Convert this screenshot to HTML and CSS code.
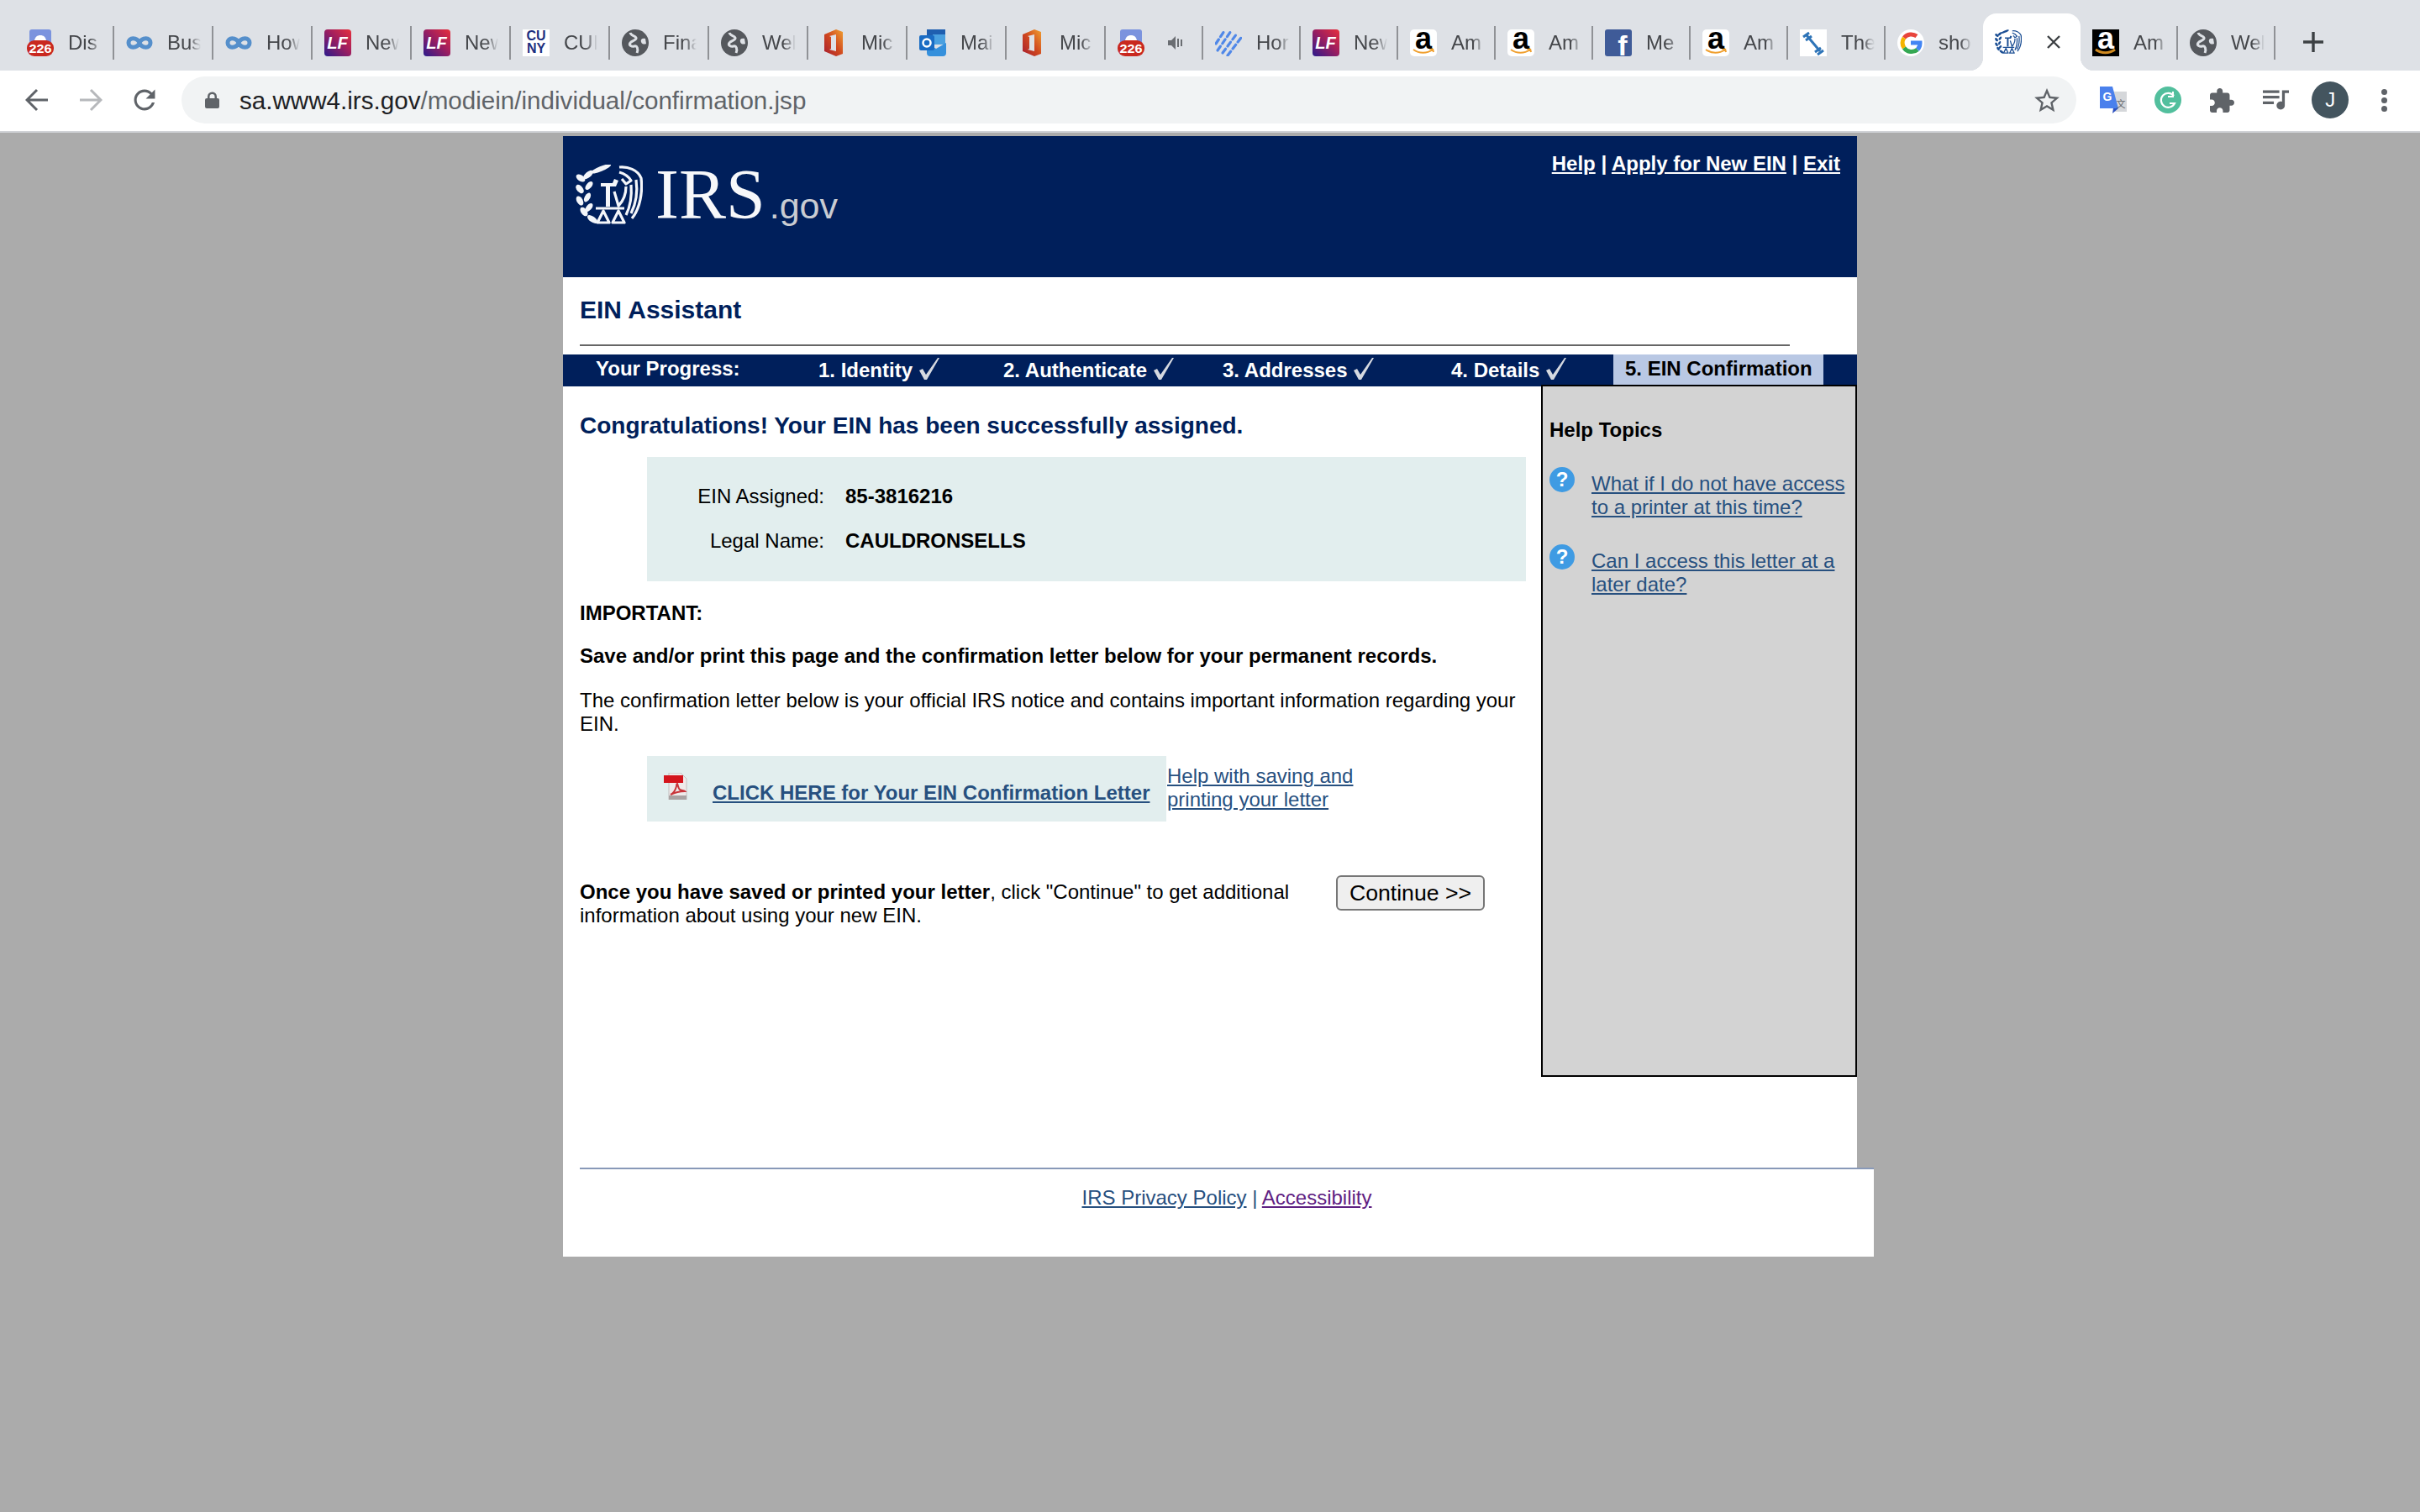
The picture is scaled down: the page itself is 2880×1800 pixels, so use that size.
FILE: index.html
```html
<!DOCTYPE html>
<html>
<head>
    <meta charset="UTF-8">
    <title>EIN Assistant</title>
    <link rel="stylesheet" href="styles.css">
</head>
<body>
    <!-- icon sheet, everything below pulls from here with <use> -->
    <svg class="icon-sheet" xmlns="http://www.w3.org/2000/svg">
        <defs>
            <linearGradient id="lf-fill" x1="0" y1="1" x2="1" y2="0">
                <stop offset="0" stop-color="#2b1a8c"/>
                <stop offset="0.55" stop-color="#a01e5e"/>
                <stop offset="1" stop-color="#e8303c"/>
            </linearGradient>
            <linearGradient id="office-fill" x1="1" y1="0" x2="0" y2="1">
                <stop offset="0" stop-color="#f0a030"/>
                <stop offset="0.5" stop-color="#d0481f"/>
                <stop offset="1" stop-color="#a51c30"/>
            </linearGradient>
        </defs>
        <symbol id="fav-discord" viewBox="0 0 32 32">
            <rect x="3" y="0" width="26" height="24" rx="3" fill="#7b93de"/>
            <path d="M9 13c1-4 3-6 7-6s6 2 7 6z" fill="#fff"/>
            <rect x="0" y="13" width="32" height="19" rx="9" fill="#c9281f"/>
        </symbol>
        <symbol id="fav-infinity" viewBox="0 0 32 32">
            <path d="M16 16C13 9 3 9 3 16s10 7 13 0 13-7 13 0-10 7-13 0z" fill="none" stroke="#558fcb" stroke-width="5"/>
        </symbol>
        <symbol id="fav-lf" viewBox="0 0 32 32">
            <rect width="32" height="32" rx="4" fill="url(#lf-fill)"/>
        </symbol>
        <symbol id="fav-globe" viewBox="0 0 32 32">
            <circle cx="16" cy="16" r="16" fill="#55585d"/>
            <path d="M10 4c1 4 6 3 7 6s-5 3-7 6 2 5 5 4 5 3 3 8" fill="none" stroke="#dee1e6" stroke-width="3"/>
            <path d="M28 11c-4-1-6 1-5 4s4 3 6 2" fill="#dee1e6"/>
        </symbol>
        <symbol id="fav-office" viewBox="0 0 32 32">
            <path fill-rule="evenodd" d="M19 0L5 6v20l14 6 8-3V3zM19 6v20l-8-2 2-1V9l-2-1z" fill="url(#office-fill)"/>
        </symbol>
        <symbol id="fav-outlook" viewBox="0 0 32 32">
            <rect x="9" y="0" width="22" height="12" fill="#1f5fb0"/>
            <rect x="16" y="6" width="15" height="12" fill="#4aa0e0"/>
            <path d="M9 16l11 7 12-7v12a4 4 0 0 1-4 4H13a4 4 0 0 1-4-4z" fill="#3590dc"/>
            <rect x="0" y="7" width="18" height="18" rx="2" fill="#1a6cc4"/>
            <circle cx="9" cy="16" r="4.5" fill="none" stroke="#fff" stroke-width="2.5"/>
        </symbol>
        <symbol id="fav-stripes" viewBox="0 0 32 32">
            <g fill="none" stroke="#5088e8" stroke-width="3.200" stroke-linecap="round" stroke-dasharray="6 4">
                <path d="M1 17L11 2"/>
                <path d="M3 25L19 2"/>
                <path d="M9 28L26 5"/>
                <path d="M15 31L31 10"/>
            </g>
        </symbol>
        <symbol id="fav-amazon" viewBox="0 0 32 32">
            <rect width="32" height="32" rx="5" fill="#fff"/>
            <path d="M4 24c7 5 16 5 23 0M27 23l1 4M27 23l-4 0" fill="none" stroke="#f0a030" stroke-width="2"/>
        </symbol>
        <symbol id="fav-amazon-dark" viewBox="0 0 32 32">
            <rect width="32" height="32" fill="#000"/>
            <path d="M4 24c7 5 16 5 23 0" fill="none" stroke="#d08a20" stroke-width="3"/>
        </symbol>
        <symbol id="fav-facebook" viewBox="0 0 32 32">
            <rect width="32" height="32" rx="3" fill="#3f5b98"/>
        </symbol>
        <symbol id="fav-strong" viewBox="0 0 32 32">
            <rect width="32" height="32" fill="#fff"/>
            <g fill="none" stroke="#2e74b8" stroke-width="3">
                <path d="M8 7L24 26"/>
                <path d="M4 9l7-5M7 13l7-5M18 27l7-5M21 30l7-5"/>
            </g>
        </symbol>
        <symbol id="fav-google" viewBox="0 0 32 32">
            <circle cx="16" cy="16" r="16" fill="#fff"/>
            <g fill="none" stroke-width="5">
                <path d="M8 10a11 11 0 0 1 15-2" stroke="#e8453c"/>
                <path d="M8 22a11 11 0 0 1 0-12" stroke="#f4b400"/>
                <path d="M24 24a11 11 0 0 1-16-2" stroke="#34a853"/>
                <path d="M16 16h11a11 11 0 0 1-3 8" stroke="#4285f4"/>
            </g>
        </symbol>
        <symbol id="seal" viewBox="0 0 80 72">
            <g fill="currentColor">
                <ellipse cx="30" cy="5" rx="13" ry="3" transform="rotate(-22 30 5)"/>
                <ellipse cx="15" cy="12" rx="7" ry="3.400" transform="rotate(-40 15 12)"/>
                <ellipse cx="6" cy="16" rx="6" ry="3.600" transform="rotate(35 6 16)"/>
                <ellipse cx="16" cy="25" rx="6" ry="3.200" transform="rotate(-50 16 25)"/>
                <ellipse cx="5" cy="29" rx="6" ry="3.600" transform="rotate(50 5 29)"/>
                <ellipse cx="14" cy="39" rx="6" ry="3.200" transform="rotate(-60 14 39)"/>
                <ellipse cx="5" cy="43" rx="6" ry="3.600" transform="rotate(60 5 43)"/>
                <ellipse cx="16" cy="51" rx="6" ry="3.200" transform="rotate(-50 16 51)"/>
                <ellipse cx="10" cy="56" rx="6" ry="3.600" transform="rotate(55 10 56)"/>
                <ellipse cx="20" cy="65" rx="7" ry="3.400" transform="rotate(35 20 65)"/>
                <path d="M30 22h14l2-5 5 2-3 7h-7v24h-5V26h-6z"/>
            </g>
            <g fill="none" stroke="currentColor" stroke-width="3.200" stroke-linejoin="round">
                <path d="M52 3c10-1 22 3 26 13 2 16-1 36-11 48"/>
                <path d="M52 9c7 2 11 5 14 10l-6 4-5-6"/>
                <path d="M72 18c2 14 0 28-6 40"/>
                <path d="M66 24c1 12 0 24-6 36"/>
                <path d="M60 26c0 8-2 16-9 23l-5-17"/>
                <path d="M26 69l7-14 7 14zM44 69l7-14 7 14z"/>
                <path d="M24 52h34"/>
            </g>
        </symbol>
        <symbol id="check" viewBox="0 0 24 26">
            <path d="M0 15l4-2 4 7L22 0h2L9 26H6z" fill="#d5d9e0"/>
        </symbol>
    </svg>

    <div class="tab-strip">
        <div class="tab tab-wide">
            <svg class="favicon" viewBox="0 0 32 32"><use href="#fav-discord"/><text x="16" y="28" class="fav-badge" textLength="27" lengthAdjust="spacingAndGlyphs">226</text></svg>
            <span class="tab-label">Dis</span>
        </div>
        <div class="tab tab-wide"><svg class="favicon"><use href="#fav-infinity"/></svg><span class="tab-label">Bus</span></div>
        <div class="tab tab-wide"><svg class="favicon"><use href="#fav-infinity"/></svg><span class="tab-label">How</span></div>
        <div class="tab tab-wide">
            <svg class="favicon" viewBox="0 0 32 32"><use href="#fav-lf"/><text x="15.5" y="23" class="fav-lf-text">LF</text></svg>
            <span class="tab-label">New</span>
        </div>
        <div class="tab tab-wide">
            <svg class="favicon" viewBox="0 0 32 32"><use href="#fav-lf"/><text x="15.5" y="23" class="fav-lf-text">LF</text></svg>
            <span class="tab-label">New</span>
        </div>
        <div class="tab tab-wide">
            <div class="fav-cuny">CU<br>NY</div>
            <span class="tab-label">CUI</span>
        </div>
        <div class="tab tab-wide"><svg class="favicon"><use href="#fav-globe"/></svg><span class="tab-label">Fina</span></div>
        <div class="tab tab-wide"><svg class="favicon"><use href="#fav-globe"/></svg><span class="tab-label">Wel</span></div>
        <div class="tab tab-wide"><svg class="favicon"><use href="#fav-office"/></svg><span class="tab-label">Mic</span></div>
        <div class="tab tab-wide"><svg class="favicon"><use href="#fav-outlook"/></svg><span class="tab-label">Mai</span></div>
        <div class="tab tab-wide"><svg class="favicon"><use href="#fav-office"/></svg><span class="tab-label">Mic</span></div>
        <div class="tab">
            <svg class="favicon" viewBox="0 0 32 32"><use href="#fav-discord"/><text x="16" y="28" class="fav-badge" textLength="27" lengthAdjust="spacingAndGlyphs">226</text></svg>
            <svg class="tab-audio" viewBox="0 0 18 16"><path d="M0 5h4l5-5v16l-5-5H0z" fill="#6a6d72"/><path d="M12 3v10M16 4v8" stroke="#6a6d72" stroke-width="2"/></svg>
        </div>
        <div class="tab"><svg class="favicon"><use href="#fav-stripes"/></svg><span class="tab-label">Hor</span></div>
        <div class="tab">
            <svg class="favicon" viewBox="0 0 32 32"><use href="#fav-lf"/><text x="15.5" y="23" class="fav-lf-text">LF</text></svg>
            <span class="tab-label">New</span>
        </div>
        <div class="tab">
            <svg class="favicon" viewBox="0 0 32 32"><use href="#fav-amazon"/><text x="16" y="23" class="fav-amazon-text">a</text></svg>
            <span class="tab-label">Am</span>
        </div>
        <div class="tab">
            <svg class="favicon" viewBox="0 0 32 32"><use href="#fav-amazon"/><text x="16" y="23" class="fav-amazon-text">a</text></svg>
            <span class="tab-label">Am</span>
        </div>
        <div class="tab">
            <svg class="favicon" viewBox="0 0 32 32"><use href="#fav-facebook"/><text x="21" y="31" class="fav-facebook-text">f</text></svg>
            <span class="tab-label">Me</span>
        </div>
        <div class="tab">
            <svg class="favicon" viewBox="0 0 32 32"><use href="#fav-amazon"/><text x="16" y="23" class="fav-amazon-text">a</text></svg>
            <span class="tab-label">Am</span>
        </div>
        <div class="tab"><svg class="favicon"><use href="#fav-strong"/></svg><span class="tab-label">The</span></div>
        <div class="tab tab-plain"><svg class="favicon"><use href="#fav-google"/></svg><span class="tab-label">sho</span></div>
        <div class="tab tab-active">
            <svg class="favicon favicon-seal"><use href="#seal"/></svg>
            <svg class="tab-close" viewBox="0 0 16 16"><path d="M1 1l14 14M15 1L1 15" stroke="#3c4043" stroke-width="2.4"/></svg>
        </div>
        <div class="tab">
            <svg class="favicon" viewBox="0 0 32 32"><use href="#fav-amazon-dark"/><text x="16" y="23" class="fav-amazon-text fav-amazon-light">a</text></svg>
            <span class="tab-label">Am</span>
        </div>
        <div class="tab"><svg class="favicon"><use href="#fav-globe"/></svg><span class="tab-label">Wel</span></div>
        <svg class="new-tab" viewBox="0 0 24 24"><path d="M12 0v24M0 12h24" stroke="#3c4043" stroke-width="3.4"/></svg>
    </div>

    <div class="toolbar">
        <div class="nav-buttons">
            <svg class="nav-icon" viewBox="0 0 28 28"><path d="M27 14H3M14 2L2 14l12 12" fill="none" stroke="#5f6368" stroke-width="3"/></svg>
            <svg class="nav-icon" viewBox="0 0 28 28"><path d="M1 14h24M14 2l12 12-12 12" fill="none" stroke="#b6b8bb" stroke-width="3"/></svg>
            <svg class="nav-icon" viewBox="3 3 18 18"><path d="M17.65 6.35C16.2 4.9 14.21 4 12 4c-4.42 0-7.99 3.58-7.99 8s3.57 8 7.99 8c3.73 0 6.84-2.55 7.73-6h-2.08c-.82 2.33-3.04 4-5.65 4-3.31 0-6-2.69-6-6s2.69-6 6-6c1.66 0 3.14.69 4.22 1.78L13 11h7V4l-2.35 2.35z" fill="#5f6368"/></svg>
        </div>
        <div class="omnibox">
            <svg class="lock-icon" viewBox="0 0 17 20"><path d="M3 8V6a5.500 5.500 0 0 1 11 0v2h1a2 2 0 0 1 2 2v8a2 2 0 0 1-2 2H2a2 2 0 0 1-2-2v-8a2 2 0 0 1 2-2zm2.500 0h6V6a3 3 0 0 0-6 0z" fill="#5f6368"/></svg>
            <span class="url"><span class="url-host">sa.www4.irs.gov</span>/modiein/individual/confirmation.jsp</span>
            <svg class="star-icon" viewBox="2 2 20 19.500"><path d="M22 9.240l-7.190-.620L12 2 9.190 8.630 2 9.240l5.460 4.730L5.820 21 12 17.270 18.180 21l-1.630-7.030L22 9.240zM12 15.400l-3.760 2.270 1-4.280-3.320-2.880 4.380-.380L12 6.100l1.710 4.040 4.380.380-3.320 2.880 1 4.280L12 15.400z" fill="#5f6368"/></svg>
        </div>
        <div class="ext-icons">
            <div class="ext-btn">
                <svg class="ext-translate" viewBox="0 0 32 32">
                    <path d="M14 6h18v24H16z" fill="#d5d7da"/>
                    <path d="M0 0h15l7 26H0z" fill="#4a80ec"/>
                    <path d="M16 26h6l-7 6z" fill="#2a4fc0"/>
                    <text x="9" y="17" class="translate-g">G</text>
                    <text x="25" y="25" class="translate-zh">文</text>
                </svg>
            </div>
            <div class="ext-btn">
                <svg class="ext-grammarly" viewBox="0 0 32 32">
                    <circle cx="16" cy="16" r="16" fill="#52bf9d"/>
                    <path d="M23 11a8.500 8.500 0 1 0 1 9h-6" fill="none" stroke="#fff" stroke-width="2.200"/>
                    <path d="M22 6v6h-6" fill="none" stroke="#fff" stroke-width="2"/>
                </svg>
            </div>
            <div class="ext-btn">
                <svg class="ext-puzzle" viewBox="2 1 21 21"><path d="M20.500 11H19V7c0-1.100-.9-2-2-2h-4V3.500C13 2.120 11.880 1 10.500 1S8 2.120 8 3.500V5H4c-1.100 0-1.990.9-1.990 2v3.800H3.500c1.490 0 2.700 1.210 2.700 2.700s-1.210 2.700-2.700 2.700H2V20c0 1.100.9 2 2 2h3.800v-1.500c0-1.490 1.210-2.700 2.700-2.700 1.490 0 2.700 1.210 2.700 2.700V22H17c1.100 0 2-.9 2-2v-4h1.500c1.380 0 2.500-1.120 2.500-2.500S21.880 11 20.500 11z" fill="#5f6368"/></svg>
            </div>
            <div class="ext-btn">
                <svg class="ext-queue" viewBox="3 6 19 14"><path d="M15 6H3v2h12V6zm0 4H3v2h12v-2zM3 16h8v-2H3v2zM17 6v8.180c-.31-.11-.65-.18-1-.18-1.660 0-3 1.340-3 3s1.340 3 3 3 3-1.340 3-3V8h3V6h-5z" fill="#5f6368"/></svg>
            </div>
            <div class="ext-btn"><div class="avatar">J</div></div>
            <div class="ext-btn">
                <div class="menu-dots"><span></span><span></span><span></span></div>
            </div>
        </div>
    </div>

    <div class="page">
        <header class="banner">
            <div class="logo">
                <svg class="logo-seal"><use href="#seal"/></svg>
                <span class="logo-irs">IRS</span>
                <span class="logo-gov">.gov</span>
            </div>
            <div class="banner-links">
                <a href="#">Help</a> | <a href="#">Apply for New EIN</a> | <a href="#">Exit</a>
            </div>
        </header>

        <div class="title-area">
            <h1>EIN Assistant</h1>
            <div class="title-rule"></div>
        </div>

        <nav class="progress">
            <div class="progress-label">Your Progress:</div>
            <div class="progress-step">1. Identity <svg class="check"><use href="#check"/></svg></div>
            <div class="progress-step">2. Authenticate <svg class="check"><use href="#check"/></svg></div>
            <div class="progress-step">3. Addresses <svg class="check"><use href="#check"/></svg></div>
            <div class="progress-step">4. Details <svg class="check"><use href="#check"/></svg></div>
            <div class="progress-current">5. EIN Confirmation</div>
        </nav>

        <div class="main">
            <div class="content">
                <h2>Congratulations! Your EIN has been successfully assigned.</h2>

                <div class="ein-box">
                    <div class="ein-row"><span class="ein-label">EIN Assigned:</span><b>85-3816216</b></div>
                    <div class="ein-row"><span class="ein-label">Legal Name:</span><b>CAULDRONSELLS</b></div>
                </div>

                <p class="important"><b>IMPORTANT:</b></p>
                <p class="save-note"><b>Save and/or print this page and the confirmation letter below for your permanent records.</b></p>
                <p class="letter-note">The confirmation letter below is your official IRS notice and contains important information regarding your EIN.</p>

                <div class="letter-row">
                    <div class="letter-box">
                        <svg class="pdf-icon" viewBox="0 0 32 32">
                            <path d="M6 0h14l7 7v25H6z" fill="#efeaea" stroke="#c4bebe"/>
                            <rect x="6" y="27" width="21" height="5" fill="#a9a3a3"/>
                            <path d="M0 3h23v9H0z" fill="#d4141c"/>
                            <path d="M8 26c4-2 6-6 7-10 0-2 0-3 1-3 1 2 1 5 3 7 2 1 5 1 6 2-4 0-11 1-17 4z" fill="none" stroke="#c8353a" stroke-width="2"/>
                        </svg>
                        <a class="letter-link" href="#">CLICK HERE for Your EIN Confirmation Letter</a>
                    </div>
                    <a class="letter-help" href="#">Help with saving and<br>printing your letter</a>
                </div>

                <div class="continue-row">
                    <p class="continue-text"><b>Once you have saved or printed your letter</b>, click "Continue" to get additional information about using your new EIN.</p>
                    <button class="continue-btn">Continue &gt;&gt;</button>
                </div>
            </div>

            <aside class="help">
                <div class="help-title">Help Topics</div>
                <div class="help-item">
                    <span class="help-icon">?</span>
                    <a href="#">What if I do not have access to a printer at this time?</a>
                </div>
                <div class="help-item">
                    <span class="help-icon">?</span>
                    <a href="#">Can I access this letter at a later date?</a>
                </div>
            </aside>
        </div>

        <footer class="page-footer">
            <div class="footer-links">
                <a href="#">IRS Privacy Policy</a> | <a class="visited" href="#">Accessibility</a>
            </div>
        </footer>
    </div>
</body>
</html>
```

FILE: styles.css
```css
body {
    margin: 0;
    background-color: #ababab;
    font-family: "Liberation Sans", Arial, sans-serif;
    font-size: 24px;
    line-height: 28px;
    color: #000;
}
a {
    color: #27507f;
}
p {
    margin: 0;
}
.icon-sheet {
    display: block;
    width: 0;
    height: 0;
}

/* browser tabs */
.tab-strip {
    display: flex;
    align-items: flex-start;
    box-sizing: border-box;
    height: 84px;
    padding: 31px 0 0 18px;
    background-color: #dee1e6;
}
.tab {
    display: flex;
    align-items: center;
    box-sizing: border-box;
    flex: none;
    width: 116px;
    height: 40px;
    padding-left: 14px;
    border-right: 2px solid #909296;
}
.tab-wide {
    width: 118px;
}
.tab-plain {
    border-right: none;
}
.tab-active {
    position: relative;
    height: 68px;
    margin-top: -15px;
    background-color: #fff;
    border-right: none;
    border-radius: 16px 16px 0 0;
}
.tab-active::before,
.tab-active::after {
    content: "";
    position: absolute;
    bottom: 0;
    width: 16px;
    height: 16px;
}
.tab-active::before {
    left: -16px;
    background: radial-gradient(circle at 0 0, #dee1e6 16px, #fff 16.5px);
}
.tab-active::after {
    right: -16px;
    background: radial-gradient(circle at 100% 0, #dee1e6 16px, #fff 16.5px);
}
.favicon {
    flex: none;
    width: 32px;
    height: 32px;
}
.favicon-seal {
    color: #1c4f94;
}
.tab-label {
    width: 40px;
    margin-left: 17px;
    overflow: hidden;
    white-space: nowrap;
    font-size: 24px;
    color: #45474b;
    -webkit-mask-image: linear-gradient(to right, #000 65%, transparent);
    mask-image: linear-gradient(to right, #000 65%, transparent);
}
.tab-audio {
    width: 18px;
    height: 16px;
    margin-left: 28px;
}
.tab-close {
    width: 16px;
    height: 16px;
    margin-left: 30px;
}
.new-tab {
    flex: none;
    width: 24px;
    height: 24px;
    margin: 7px 0 0 33px;
}
.fav-badge {
    font: bold 15px "Liberation Sans", sans-serif;
    fill: #fff;
    text-anchor: middle;
}
.fav-lf-text {
    font: italic bold 20px "Liberation Sans", sans-serif;
    fill: #fff;
    text-anchor: middle;
}
.fav-cuny {
    flex: none;
    box-sizing: border-box;
    width: 32px;
    height: 32px;
    background-color: #fff;
    color: #1d2f80;
    font-size: 16px;
    font-weight: bold;
    line-height: 15px;
    text-align: center;
}
.fav-amazon-text {
    font: bold 36px "Liberation Sans", sans-serif;
    fill: #000;
    text-anchor: middle;
}
.fav-amazon-light {
    fill: #fff;
}
.fav-facebook-text {
    font: bold 34px "Liberation Sans", sans-serif;
    fill: #fff;
    text-anchor: middle;
}

/* address bar row */
.toolbar {
    display: flex;
    align-items: center;
    box-sizing: border-box;
    height: 74px;
    padding: 0 0 2px 30px;
    background-color: #fff;
    border-bottom: 2px solid #d0d2d6;
}
.nav-buttons {
    display: flex;
    gap: 36px;
}
.nav-icon {
    width: 28px;
    height: 28px;
}
.omnibox {
    display: flex;
    align-items: center;
    box-sizing: border-box;
    width: 2255px;
    height: 56px;
    margin-left: 30px;
    padding: 0 20px 0 28px;
    background-color: #f1f3f4;
    border-radius: 28px;
}
.lock-icon {
    width: 17px;
    height: 20px;
}
.url {
    margin-left: 24px;
    padding-top: 2px;
    font-size: 29.6px;
    color: #5f6368;
}
.url-host {
    color: #202124;
}
.star-icon {
    width: 30px;
    height: 29px;
    margin-left: auto;
}
.ext-icons {
    display: flex;
    align-items: center;
    margin-left: 12px;
}
.ext-btn {
    display: flex;
    align-items: center;
    justify-content: center;
    width: 64.5px;
}
.ext-translate,
.ext-grammarly {
    width: 32px;
    height: 32px;
}
.translate-g {
    font: bold 14px "Liberation Sans", sans-serif;
    fill: #fff;
    text-anchor: middle;
}
.translate-zh {
    font: 11px "Noto Sans CJK SC", sans-serif;
    fill: #5f6368;
    text-anchor: middle;
}
.ext-puzzle {
    width: 29px;
    height: 29px;
}
.ext-queue {
    width: 31px;
    height: 24px;
}
.avatar {
    width: 44px;
    height: 44px;
    border-radius: 50%;
    background-color: #44555f;
    color: #fff;
    font-size: 24px;
    line-height: 44px;
    text-align: center;
}
.menu-dots {
    display: flex;
    flex-direction: column;
    gap: 3px;
}
.menu-dots span {
    width: 7px;
    height: 7px;
    border-radius: 50%;
    background-color: #5f6368;
}

/* irs page */
.page {
    width: 1540px;
    margin: 4px auto 0;
    background-color: #fff;
}
.banner {
    display: flex;
    justify-content: space-between;
    height: 168px;
    background-color: #001f5b;
    color: #fff;
}
.logo {
    display: flex;
    align-items: baseline;
    padding: 28px 0 0 15px;
    height: 72px;
}
.logo-seal {
    align-self: flex-start;
    width: 80px;
    height: 72px;
    margin-top: 6px;
    color: #f4f6fa;
    filter: blur(0.4px);
}
.logo-irs {
    margin-left: 15px;
    font-family: "Liberation Serif", "Times New Roman", serif;
    font-size: 84px;
    line-height: 84px;
    color: #f7f8fa;
}
.logo-gov {
    margin-left: 5px;
    font-size: 43px;
    line-height: 42px;
    color: #c9ccd2;
}
.banner-links {
    padding: 19px 20px 0 0;
    font-weight: bold;
}
.banner-links a {
    color: #fff;
}
.title-area {
    height: 92px;
    padding-left: 20px;
}
h1 {
    height: 80px;
    margin: 0;
    font-size: 30px;
    line-height: 78px;
    color: #001f5b;
}
.title-rule {
    width: 1440px;
    height: 2px;
    background-color: #666;
}
.progress {
    display: grid;
    grid-template-columns: 265px 220px 261px 272px 193px 250px;
    height: 38px;
    padding-left: 39px;
    background-color: #001f5b;
    color: #fff;
    font-weight: bold;
    line-height: 34px;
}
.progress-step {
    display: flex;
    align-items: flex-start;
    line-height: 38px;
    white-space: pre;
}
.check {
    width: 24px;
    height: 26px;
    margin: 4px 0 0 1px;
}
.progress-current {
    height: 36px;
    padding-left: 14px;
    background-color: #b9c8e4;
    color: #000;
}
.main {
    display: flex;
    align-items: flex-start;
    height: 930px;
}
.content {
    box-sizing: border-box;
    width: 1164px;
    padding: 31px 18px 0 20px;
}
h2 {
    margin: 0;
    font-size: 28px;
    line-height: 32px;
    color: #001f5b;
}
.ein-box {
    display: flex;
    flex-direction: column;
    gap: 25px;
    margin: 21px 0 0 80px;
    padding: 33px 0 34px;
    background-color: #e2eeee;
}
.ein-row {
    display: flex;
    gap: 25px;
}
.ein-label {
    width: 211px;
    text-align: right;
}
.important {
    margin-top: 24px;
}
.save-note {
    margin-top: 23px;
}
.letter-note {
    margin-top: 25px;
}
.letter-row {
    display: flex;
    margin: 24px 0 0 80px;
}
.letter-box {
    display: flex;
    align-items: flex-start;
    box-sizing: border-box;
    width: 618px;
    height: 78px;
    padding: 20px 0 0 20px;
    background-color: #e2eeee;
}
.pdf-icon {
    flex: none;
    width: 32px;
    height: 32px;
}
.letter-link {
    margin: 10px 0 0 26px;
    font-weight: bold;
    white-space: nowrap;
}
.letter-help {
    height: 56px;
    margin: 10px 0 0 1px;
}
.continue-row {
    display: flex;
    align-items: flex-start;
    margin-top: 64px;
}
.continue-text {
    width: 860px;
    padding-top: 6px;
}
.continue-btn {
    flex: none;
    width: 177px;
    height: 42px;
    margin-left: 40px;
    padding: 0;
    background-color: #efefef;
    border: 2px solid #767676;
    border-radius: 6px;
    font-family: "Liberation Sans", Arial, sans-serif;
    font-size: 26.67px;
    color: #000;
}
.help {
    flex: none;
    box-sizing: border-box;
    width: 376px;
    height: 824px;
    margin-top: -2px;
    padding: 38px 8px 0;
    background-color: #d3d3d3;
    border: 2px solid #000;
}
.help-title {
    font-weight: bold;
}
.help-item {
    display: flex;
    align-items: flex-start;
    gap: 20px;
    margin-top: 30px;
}
.help-item a {
    margin-top: 6px;
}
.help-icon {
    flex: none;
    width: 30px;
    height: 30px;
    border-radius: 50%;
    background-color: #3f9be3;
    color: #fff;
    font-weight: bold;
    line-height: 30px;
    text-align: center;
}
.page-footer {
    box-sizing: border-box;
    width: 1560px;
    height: 106px;
    padding-left: 20px;
    background-color: #fff;
}
.footer-links {
    padding-top: 20px;
    border-top: 2px solid #8899b8;
    color: #27507f;
    text-align: center;
}
.visited {
    color: #5f2182;
}
```
